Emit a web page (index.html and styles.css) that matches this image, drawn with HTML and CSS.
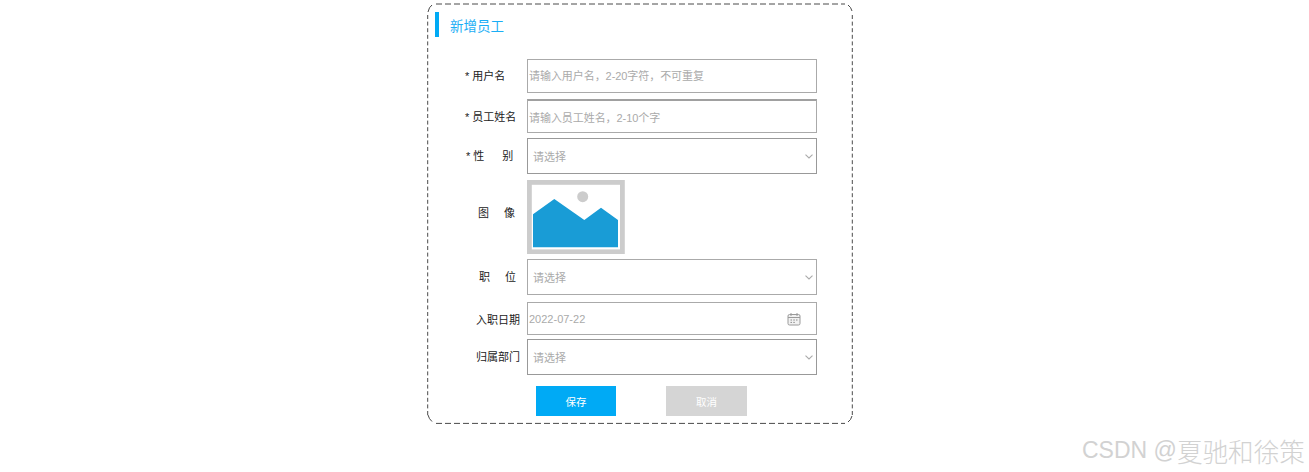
FILE: index.html
```html
<!DOCTYPE html>
<html lang="zh-CN">
<head>
<meta charset="utf-8">
<title>新增员工</title>
<link rel="stylesheet" href="styles.css">
</head>
<body>
<main class="card">
  <svg class="card-outline" viewBox="0 0 426 421">
    <path class="edge-h" d="M9 1H418M9 420.4H418"/>
    <path class="edge-v" d="M.7 12V412M425.3 12V412"/>
    <path class="corner" d="M1 9Q2 4 5 2M421 2Q424 4 425 8M1 412Q2 416 5 418.5M421 419Q424 417 425 413"/>
  </svg>
  <h1 class="title">新增员工</h1>
  <form class="form">
    <div class="row row-first">
      <label class="label label-req">*&nbsp;用户名</label>
      <input class="field field-input" type="text" placeholder="请输入用户名，2-20字符，不可重复">
    </div>
    <div class="row row-second gap-6">
      <label class="label label-req label-low">*&nbsp;员工姓名</label>
      <input class="field field-input field-low" type="text" placeholder="请输入员工姓名，2-10个字">
    </div>
    <div class="row gap-5">
      <label class="label label-sex"><span class="star">*</span><span class="spread spread-wide"><span>性</span><span>别</span></span></label>
      <div class="field field-select field-dark">
        <span>请选择</span>
        <svg class="chevron" viewBox="0 0 8 5"><path d="M.5.7L4 4 7.500.7"/></svg>
      </div>
    </div>
    <div class="row gap-6 row-top">
      <label class="label label-image"><span class="spread"><span>图</span><span>像</span></span></label>
      <svg class="avatar" viewBox="0 0 98 74">
        <rect x="2.4" y="2.4" width="93" height="69.400" fill="#fff" stroke="#cccccc" stroke-width="4.8"/>
        <circle cx="55.700" cy="16.700" r="5.500" fill="#cccccc"/>
        <path d="M6 34.300L27.300 19l30 21L74 27.700 91 40v27.300H6z" fill="#199cd6"/>
      </svg>
    </div>
    <div class="row gap-5">
      <label class="label label-pair"><span class="spread"><span>职</span><span>位</span></span></label>
      <div class="field field-select">
        <span>请选择</span>
        <svg class="chevron" viewBox="0 0 8 5"><path d="M.5.7L4 4 7.500.7"/></svg>
      </div>
    </div>
    <div class="row row-date gap-7">
      <label class="label label-long label-low">入职日期</label>
      <div class="field field-date">
        <span class="date-text">2022-07-22</span>
        <svg class="calendar" viewBox="0 0 14 14">
          <rect x="1" y="2.500" width="12" height="10.500" rx="1.500" fill="#f1f1f1" stroke="#9a9a9a"/>
          <path d="M1 5.500h12M4 1v3M10 1v3" fill="none" stroke="#9a9a9a"/>
          <path d="M3.500 8h1.500M6.300 8h1.500M9 8h1.500M3.500 10.400h1.500M6.300 10.400h1.500" fill="none" stroke="#8c8c8c"/>
        </svg>
      </div>
    </div>
    <div class="row gap-4">
      <label class="label label-long">归属部门</label>
      <div class="field field-select field-dark">
        <span>请选择</span>
        <svg class="chevron" viewBox="0 0 8 5"><path d="M.5.7L4 4 7.500.7"/></svg>
      </div>
    </div>
    <div class="actions">
      <button class="btn btn-save" type="button">保存</button>
      <button class="btn btn-cancel" type="button">取消</button>
    </div>
  </form>
</main>
<div class="watermark"><span class="wm-latin">CSDN @</span><span class="wm-cjk">夏驰和徐策</span></div>
</body>
</html>
```
FILE: styles.css
```css
* {
  box-sizing: border-box;
}

html,
body {
  margin: 0;
  padding: 0;
  height: 472px;
  overflow: hidden;
  background: #ffffff;
}

body {
  font-family: "Liberation Sans", "Noto Sans CJK SC", sans-serif;
  font-size: 11px;
  color: #222222;
  padding: 3px 0 0 427px;
}

.card {
  position: relative;
  width: 426px;
  height: 421px;
  padding: 9px 0 0 8px;
}

.card-outline {
  position: absolute;
  top: 0;
  left: 0;
  width: 426px;
  height: 421px;
  fill: none;
  stroke: #4a4a4a;
  stroke-width: 1;
  pointer-events: none;
}

.edge-h {
  stroke-dasharray: 6 3;
}

.edge-v {
  stroke-dasharray: 4 2.6;
}

.title {
  margin: 0;
  height: 25px;
  border-left: 4.5px solid #00aaf5;
  padding-left: 11px;
  font-size: 13.5px;
  font-weight: 400;
  line-height: 29px;
  color: #1aaef5;
}

.form {
  margin: 22px 0 0 -7px;
  display: flex;
  flex-direction: column;
}

.row {
  display: flex;
  align-items: center;
  height: 36px;
}

.row-first,
.row-second {
  height: 34px;
}

.row-top {
  height: 74px;
}

.row-date {
  height: 33px;
}

.gap-4 {
  margin-top: 4px;
}

.gap-5 {
  margin-top: 5px;
}

.gap-6 {
  margin-top: 6px;
}

.gap-7 {
  margin-top: 7px;
}

.label {
  flex: none;
  width: 99px;
  display: flex;
  align-items: center;
  color: #222222;
  line-height: 14px;
}

.label-low {
  padding-top: 2px;
}

.label-req {
  padding-left: 37px;
}

.label-sex {
  padding-left: 38px;
  gap: 3px;
}

.label-image {
  padding: 0 0 8px 50px;
}

.label-pair {
  padding-left: 51px;
}

.label-long {
  padding-left: 48px;
}

.spread {
  display: flex;
  gap: 15px;
}

.spread-wide {
  gap: 18px;
}

.field {
  flex: none;
  width: 290px;
  height: 100%;
  border: 1px solid #aaaaaa;
  background: #ffffff;
  color: #aaaaaa;
  font-family: inherit;
  font-size: 11px;
  display: flex;
  align-items: center;
}

.field-dark {
  border-color: #999999;
}

.field-input {
  padding: 0 1px;
  outline: none;
  border-radius: 0;
  letter-spacing: -0.06px;
}

.field-low {
  padding-top: 2px;
  border-top-width: 2px;
  border-top-color: #a0a0a0;
}

.field-input::placeholder {
  color: #aaaaaa;
  opacity: 1;
}

.field-select {
  justify-content: space-between;
  padding: 0 3px 0 5px;
}

.chevron {
  width: 8px;
  height: 5px;
  fill: none;
  stroke: #aaaaaa;
  stroke-width: 1.1;
}

.field-date {
  justify-content: space-between;
  padding: 0 15px 0 1px;
}

.calendar {
  width: 14px;
  height: 14px;
}

.avatar {
  display: block;
  flex: none;
  width: 98px;
  height: 74px;
}

.actions {
  display: flex;
  margin: 11px 0 0 108px;
  gap: 50px;
}

.btn {
  width: 80px;
  height: 30px;
  border: 0;
  padding: 0;
  font-family: inherit;
  font-size: 10.5px;
  color: #ffffff;
}

.btn-save {
  background: #00aaf5;
}

.btn-cancel {
  width: 81px;
  background: #d5d5d5;
}

.watermark {
  position: absolute;
  left: 1082px;
  top: 435px;
  display: flex;
  align-items: center;
  height: 30px;
  color: #d2d2d2;
  font-weight: 300;
  white-space: nowrap;
}

.wm-latin {
  font-size: 23px;
  white-space: pre;
}

.wm-cjk {
  font-size: 25.6px;
}
```
